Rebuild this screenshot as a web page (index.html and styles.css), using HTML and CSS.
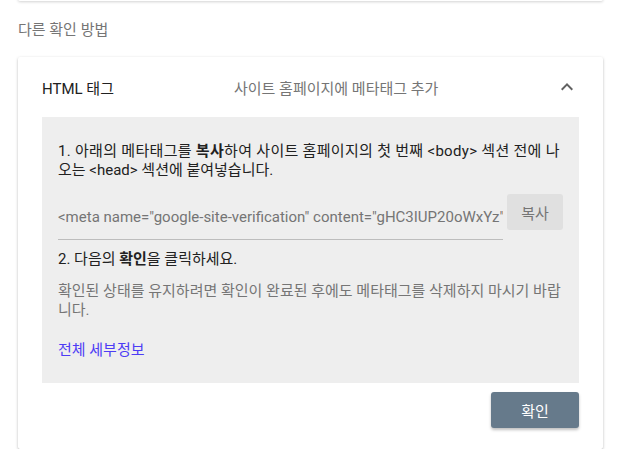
FILE: index.html
```html
<!DOCTYPE html>
<html lang="ko">
<head>
<meta charset="utf-8">
<link rel="stylesheet" href="styles.css">
</head>
<body>
<div class="page">
  <div class="prev-card"></div>
  <div class="section-title">다른 확인 방법</div>
  <div class="card">
    <div class="card-header">
      <div class="method-name">HTML 태그</div>
      <div class="method-desc">사이트 홈페이지에 메타태그 추가</div>
      <svg class="chevron" viewBox="0 0 24 24" width="24" height="24"><path d="M12 8l-6 6 1.41 1.41L12 10.83l4.59 4.58L18 14z" fill="#616161"/></svg>
    </div>
    <div class="panel">
      <p class="step step1">1. 아래의 메타태그를 <b>복사</b>하여 사이트 홈페이지의 첫 번째 &lt;body&gt; 섹션 전에 나오는 &lt;head&gt; 섹션에 붙여넣습니다.</p>
      <div class="copy-row">
        <div class="code-field"><span class="code-text">&lt;meta name="google-site-verification" content="gHC3IUP20oWxYz" /&gt;</span></div>
        <button class="copy-btn">복사</button>
      </div>
      <p class="step step2">2. 다음의 <b>확인</b>을 클릭하세요.</p>
      <p class="note">확인된 상태를 유지하려면 확인이 완료된 후에도 메타태그를 삭제하지 마시기 바랍니다.</p>
      <a class="details" href="#">전체 세부정보</a>
    </div>
    <div class="actions">
      <button class="verify-btn">확인</button>
    </div>
  </div>
</div>
</body>
</html>
```

FILE: styles.css
```css
* { box-sizing: border-box; }
html, body {
  margin: 0;
  padding: 0;
  background: #ffffff;
}
body {
  font-family: Roboto, "Noto Sans CJK KR", sans-serif;
  font-size: 15px;
  color: #212121;
  overflow: hidden;
}
.page {
  padding: 0 17px 0 18px;
}
.prev-card {
  height: 20px;
  margin-top: -19px;
  background: #fff;
  box-shadow: 0 1px 3px rgba(0,0,0,0.18);
  border-radius: 2px;
}
.section-title {
  color: #757575;
  font-size: 15px;
  line-height: 20px;
  margin-top: 19px;
  height: 20px;
}
.card {
  margin-top: 17px;
  background: #fff;
  border-radius: 2px;
  box-shadow: 0 1px 3px rgba(0,0,0,0.25), 0 1px 1px rgba(0,0,0,0.08);
  padding: 0 24px 21px 24px;
}
.card-header {
  height: 60px;
  display: flex;
  align-items: center;
}
.method-name {
  width: 192px;
  color: #212121;
}
.method-desc {
  flex: 1;
  color: #757575;
}
.chevron {
  display: block;
}
.panel {
  background: #eeeeee;
  padding: 25px 16px 23px 16px;
}
.panel p {
  margin: 0;
  line-height: 19px;
}
.step1::first-line {
  letter-spacing: 0.3px;
}
.step b { font-weight: 700; }
.copy-row {
  display: flex;
  align-items: flex-start;
  margin-top: 14px;
  gap: 4px;
}
.code-field {
  flex: 1;
  min-width: 0;
  height: 46px;
  border-bottom: 1px solid #bdbdbd;
  overflow: hidden;
  white-space: nowrap;
  padding-top: 13px;
  color: #757575;
  line-height: 20px;
}
.copy-btn {
  width: 56px;
  height: 36px;
  border: none;
  border-radius: 3px;
  background: #e0e0e0;
  color: #757575;
  font-family: Roboto, "Noto Sans CJK KR", sans-serif;
  font-size: 15px;
  padding: 0;
}
.panel .step2 {
  margin-top: 10px;
}
.panel .note {
  margin-top: 13px;
  color: #757575;
}
.details {
  display: block;
  margin-top: 21px;
  line-height: 19px;
  color: #4d3cf5;
  text-decoration: none;
}
.actions {
  display: flex;
  justify-content: flex-end;
  padding-top: 9px;
}
.verify-btn {
  width: 88px;
  height: 36px;
  border: none;
  border-radius: 3px;
  background: #667a8b;
  color: #fff;
  font-family: Roboto, "Noto Sans CJK KR", sans-serif;
  font-size: 15px;
  box-shadow: 0 2px 3px rgba(0,0,0,0.25);
  padding: 0;
}
```
